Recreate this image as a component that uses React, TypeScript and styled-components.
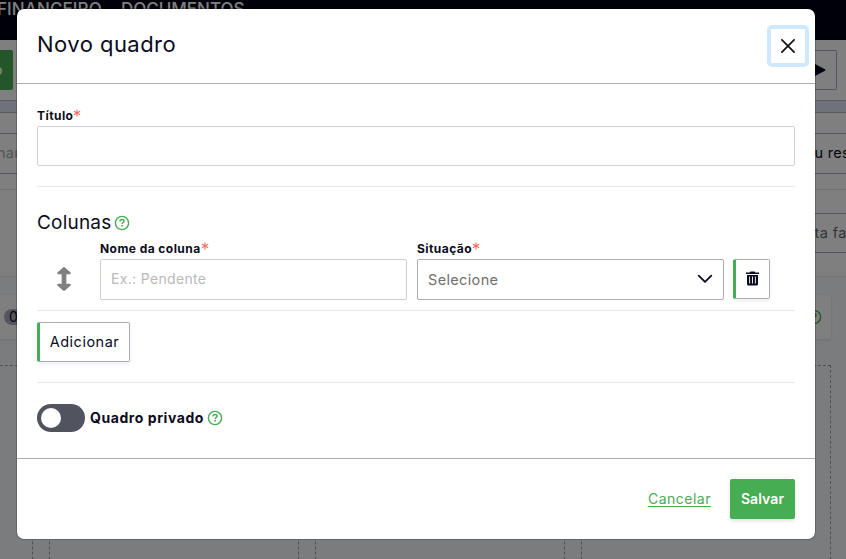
import React from "react";
import styled, { createGlobalStyle } from "styled-components";

const GlobalStyle = createGlobalStyle`
  * { box-sizing: border-box; }
  body {
    margin: 0;
    overflow: hidden;
    font-family: Inter, "Liberation Sans", sans-serif;
    color: #0b0b20;
  }
  button, input { font: inherit; color: inherit; }
`;

const Screen = styled.div`
  position: relative;
  width: 846px;
  height: 559px;
  overflow: hidden;
  background: #f7f9fc;
`;

const Nav = styled.nav`
  display: flex;
  gap: 19px;
  height: 40px;
  margin-left: -3px;
  background: #000014;
  color: #fff;
  font-size: 17px;
  font-weight: 500;
  line-height: 19px;
  white-space: nowrap;
`;

const NavItem = styled.span<{ $w: number; $track: number }>`
  width: ${(p) => p.$w}px;
  letter-spacing: ${(p) => p.$track}px;
`;

const ToolBar = styled.div`
  display: flex;
  justify-content: space-between;
  height: 60px;
  padding: 10px 9px 10px 0;
  background: #fff;
`;

const GreenTab = styled.div`
  width: 13px;
  height: 40px;
  overflow: hidden;
  border-radius: 0 2px 2px 0;
  background: #47ad52;
  color: #fff;
  font-size: 14px;
  font-weight: 600;
  line-height: 40px;
  text-indent: -6px;
`;

const PlayButton = styled.div`
  display: flex;
  align-items: center;
  justify-content: flex-end;
  width: 50px;
  height: 40px;
  padding-right: 10px;
  border: 1px solid #a9abbf;
  border-radius: 2px;
`;

const Band = styled.div`
  height: 13px;
  border: solid #b5b8c8;
  border-width: 1px 0;
  background: #dfe5f5;
`;

const Filters = styled.div`
  height: 77px;
  padding-top: 20px;
  border-bottom: 1px solid #e4e4e8;
  background: #fff;
`;

const FilterRow = styled.div`
  display: flex;
  justify-content: space-between;
  height: 41px;
  border: solid #a9abbf;
  border-width: 1px 0;
  font-size: 14.5px;
  line-height: 38px;
  letter-spacing: 0.3px;
  white-space: nowrap;
`;

const FilterEdge = styled.span<{ $muted?: boolean }>`
  margin: 0 -4px 0 -3px;
  color: ${(p) => (p.$muted ? "#aaa" : "#0b0b20")};
`;

const SecondFilters = styled.div`
  display: flex;
  justify-content: flex-end;
  height: 87px;
  padding-top: 23px;
  border-bottom: 1px solid #e4e4e8;
  background: #fff;
`;

const DateFilter = styled.div`
  width: 60px;
  height: 40px;
  padding-left: 20px;
  border: solid #a9abbf;
  border-width: 1px 0;
  color: #6c6c6c;
  font-size: 14.5px;
  line-height: 38px;
  letter-spacing: 0.4px;
  white-space: nowrap;
`;

const Board = styled.div`
  display: flex;
  gap: 16px;
  width: 1048px;
  margin-left: -217px;
  padding-top: 18px;
`;

const Column = styled.div`
  width: 250px;
`;

const ColumnHead = styled.div`
  display: flex;
  align-items: center;
  justify-content: flex-end;
  height: 44px;
  margin-bottom: 26px;
  padding-right: 9px;
  background: #fff;
  box-shadow: 0 1px 3px rgba(0, 0, 0, 0.12);
`;

const Count = styled.span`
  width: 20px;
  height: 16px;
  border-radius: 8px;
  background: #a9abbf;
  font-size: 14px;
  line-height: 16px;
  text-indent: 5px;
`;

const DropZone = styled.div`
  height: 240px;
  border: 1px dashed #98a3a3;
`;

const Overlay = styled.div`
  position: absolute;
  inset: 0;
  padding: 8px 0 0 16px;
  background: rgba(0, 0, 0, 0.5);
`;

const Dialog = styled.section`
  width: 800px;
  height: 532px;
  border: 1px solid rgba(0, 0, 0, 0.2);
  border-radius: 8px;
  background: #fff;
  background-clip: padding-box;
`;

const Header = styled.header`
  display: flex;
  justify-content: space-between;
  height: 75px;
  padding: 16px 6px 0 20px;
  border-bottom: 1px solid #a9abbf;
`;

const Title = styled.h1<{ $size: number; $track?: number }>`
  margin: 0;
  font-size: ${(p) => p.$size}px;
  font-weight: 400;
  line-height: 38px;
  letter-spacing: ${(p) => p.$track ?? 0}px;
  white-space: nowrap;
`;

const CloseButton = styled.button`
  display: grid;
  place-items: center;
  width: 42px;
  height: 42px;
  padding: 0;
  border: 4px solid #cfe8fc;
  border-radius: 5px;
  background: #fff;
  color: #111;
`;

const Body = styled.div`
  height: 374px;
  padding: 22px 20px 0;
`;

const Label = styled.label`
  display: flex;
  height: 20px;
  font-size: 12px;
  font-weight: 700;
  line-height: 20px;
  letter-spacing: 0.44px;
  white-space: nowrap;
`;

const Required = styled.svg`
  flex: none;
  width: 8px;
  height: 8px;
  margin-top: 3px;
  stroke: #f8685a;
  stroke-width: 1.1;
`;

const Input = styled.input<{ $h: number }>`
  display: block;
  width: 100%;
  height: ${(p) => p.$h}px;
  padding: 0 10px 2px;
  border: 1px solid #cdd0d9;
  border-radius: 2px;
  background: #fff;
  font-size: 14px;
  letter-spacing: 0.33px;
  outline: 0;
  &::placeholder { color: #b9b9b9; opacity: 1; }
`;

const Rule = styled.hr<{ $top: number }>`
  height: 1px;
  margin: ${(p) => p.$top}px 0 0;
  border: 0;
  background: #e8e8ea;
`;

const SectionTitle = styled.div`
  display: flex;
  align-items: center;
  gap: 3px;
  height: 38px;
  margin-top: 17px;
`;

const ColumnRow = styled.div`
  display: grid;
  grid-template-columns: 53px 307px 307px 37px;
  column-gap: 10px;
  height: 62px;
  margin-top: -3px;
`;

const Handle = styled.div`
  display: flex;
  justify-content: center;
  padding-top: 28px;
`;

const Select = styled.button`
  display: flex;
  align-items: center;
  justify-content: space-between;
  width: 307px;
  height: 41px;
  padding: 0 10px 1px;
  border: 1px solid #a9abbf;
  border-radius: 2px;
  background: #fff;
  color: #6f6f6f;
  font-size: 14.5px;
  letter-spacing: 0.35px;
`;

const OutlineButton = styled.button<{ $w: number }>`
  display: flex;
  align-items: center;
  justify-content: center;
  width: ${(p) => p.$w}px;
  height: 40px;
  padding: 0 0 1px;
  border: 1px solid #a9abbf;
  border-left: 3px solid #47ad52;
  border-radius: 2px;
  background: #fff;
  font-size: 14.5px;
  letter-spacing: 0.5px;
  box-shadow: 0 2px 4px rgba(0, 0, 0, 0.07);
`;

const DeleteCell = styled.div`
  padding-top: 20px;
  margin-left: -1px;
`;

const AddRow = styled.div`
  margin-top: 11px;
`;

const SwitchRow = styled.div`
  display: flex;
  align-items: center;
  height: 28px;
  margin-top: 21px;
`;

const Toggle = styled.span`
  display: flex;
  align-items: center;
  width: 48px;
  height: 28px;
  padding-left: 4px;
  border-radius: 14px;
  background: #51545f;
  &::before {
    content: "";
    width: 20px;
    height: 20px;
    border-radius: 50%;
    background: #fff;
  }
`;

const ToggleText = styled.span`
  width: 122px;
  padding: 0 0 2px 5px;
  font-size: 14px;
  font-weight: 700;
  letter-spacing: 0.57px;
  white-space: nowrap;
`;

const Footer = styled.footer`
  display: flex;
  align-items: center;
  justify-content: flex-end;
  gap: 19px;
  height: 81px;
  padding: 0 20px;
  border-top: 1px solid #a9abbf;
`;

const Cancel = styled.a`
  padding-bottom: 2px;
  color: #47ad52;
  font-size: 14px;
  letter-spacing: 0.5px;
  text-decoration: underline;
  text-underline-offset: 2px;
`;

const Save = styled.button`
  width: 65px;
  height: 40px;
  padding: 0 0 1px;
  border: 0;
  border-radius: 2px;
  background: #47ad52;
  color: #fff;
  font-size: 14px;
  font-weight: 600;
  letter-spacing: 0.1px;
  box-shadow: 0 2px 4px rgba(0, 0, 0, 0.12);
`;

const Help = () => (
  <svg width="16" height="16" viewBox="0 0 16 16" fill="none" stroke="#47ad52">
    <circle cx="8" cy="8" r="6.6" strokeWidth="1.4" />
    <path d="M5.9 6.4c.1-1.3.9-1.9 2.1-1.9s2 .7 2 1.7C10 7.5 8.2 7.5 8.2 9" strokeWidth="1.5" />
    <path d="M7.3 10.8h1.7" strokeWidth="1.5" />
  </svg>
);

const Field = ({ text, children }: { text: string; children: React.ReactNode }) => (
  <div>
    <Label>
      {text}
      <Required viewBox="0 0 8 8" aria-label="obrigatório">
        <path d="M4 .5V7.5M.9 2.2 7.1 5.8M.9 5.8 7.1 2.2" />
      </Required>
    </Label>
    {children}
  </div>
);

export default function App() {
  return (
    <>
      <GlobalStyle />
      <Screen>
        <Nav>
          <NavItem $w={105} $track={0.1}>FINANCEIRO</NavItem>
          <NavItem $w={126} $track={0}>DOCUMENTOS</NavItem>
        </Nav>
        <ToolBar>
          <GreenTab>o</GreenTab>
          <PlayButton>
            <svg width="14" height="14" viewBox="0 0 14 14">
              <path d="M1 1.5Q1 0 2.5.7L13 6.2q1 .8 0 1.6L2.5 13.3Q1 14 1 12.5Z" fill="#000014" />
            </svg>
          </PlayButton>
        </ToolBar>
        <Band />
        <Filters>
          <FilterRow>
            <FilterEdge $muted>nar</FilterEdge>
            <FilterEdge>ou res</FilterEdge>
          </FilterRow>
        </Filters>
        <SecondFilters>
          <DateFilter>ata fa</DateFilter>
        </SecondFilters>
        <Board>
          <Column><ColumnHead><Count>0</Count></ColumnHead><DropZone /></Column>
          <Column><ColumnHead /><DropZone /></Column>
          <Column><ColumnHead /><DropZone /></Column>
          <Column><ColumnHead><Help /></ColumnHead><DropZone /></Column>
        </Board>
        <Overlay>
          <Dialog role="dialog" aria-label="Novo quadro">
            <Header>
              <Title $size={22} $track={0.46}>Novo quadro</Title>
              <CloseButton aria-label="Fechar">
                <svg width="14" height="14" viewBox="0 0 14 14" fill="none" stroke="currentColor" strokeWidth="1.7" strokeLinecap="round">
                  <path d="M.9.9 13.1 13.1M13.1.9.9 13.1" />
                </svg>
              </CloseButton>
            </Header>
            <Body>
              <Field text="Título"><Input $h={40} /></Field>
              <Rule $top={20} />
              <SectionTitle>
                <Title as="h2" $size={19} $track={0.2}>Colunas</Title>
                <Help />
              </SectionTitle>
              <ColumnRow>
                <Handle>
                  <svg width="14" height="24" viewBox="0 0 13 25" preserveAspectRatio="none" fill="#808080">
                    <path d="M6.5 0Q7 0 7.4.4L12.6 5.8Q13.2 7.5 12 7.5H8.7V17.5H12Q13.2 17.5 12.6 19.2L7.4 24.6Q6.5 25.3 5.6 24.6L.4 19.2Q-.2 17.5 1 17.5H4.3V7.5H1Q-.2 7.5.4 5.8L5.6.4Q6 0 6.5 0Z" />
                  </svg>
                </Handle>
                <Field text="Nome da coluna"><Input $h={41} placeholder="Ex.: Pendente" /></Field>
                <Field text="Situação">
                  <Select>
                    Selecione
                    <svg width="16" height="10" viewBox="0 0 16 10" fill="none" stroke="#0b0b20" strokeWidth="1.8" strokeLinecap="round" strokeLinejoin="round">
                      <path d="M1.7 1.6 8 7.8 14.3 1.6" />
                    </svg>
                  </Select>
                </Field>
                <DeleteCell>
                  <OutlineButton $w={37} aria-label="Excluir">
                    <svg width="13" height="15" viewBox="0 0 13 15">
                      <path fill="#0b0b20" fillRule="evenodd" d="M0 1.5h3.7L4.5.5h4l.8 1H13V3H0ZM1 4h11v9q0 1.5-1.5 1.5h-8Q1 14.5 1 13ZM3.2 5.5v7h.9v-7ZM6 5.5v7h.9v-7ZM8.9 5.5v7h.9v-7Z" />
                    </svg>
                  </OutlineButton>
                </DeleteCell>
              </ColumnRow>
              <Rule $top={9} />
              <AddRow><OutlineButton $w={93}>Adicionar</OutlineButton></AddRow>
              <Rule $top={20} />
              <SwitchRow>
                <Toggle role="switch" aria-checked="false" />
                <ToggleText>Quadro privado</ToggleText>
                <Help />
              </SwitchRow>
            </Body>
            <Footer>
              <Cancel>Cancelar</Cancel>
              <Save>Salvar</Save>
            </Footer>
          </Dialog>
        </Overlay>
      </Screen>
    </>
  );
}
